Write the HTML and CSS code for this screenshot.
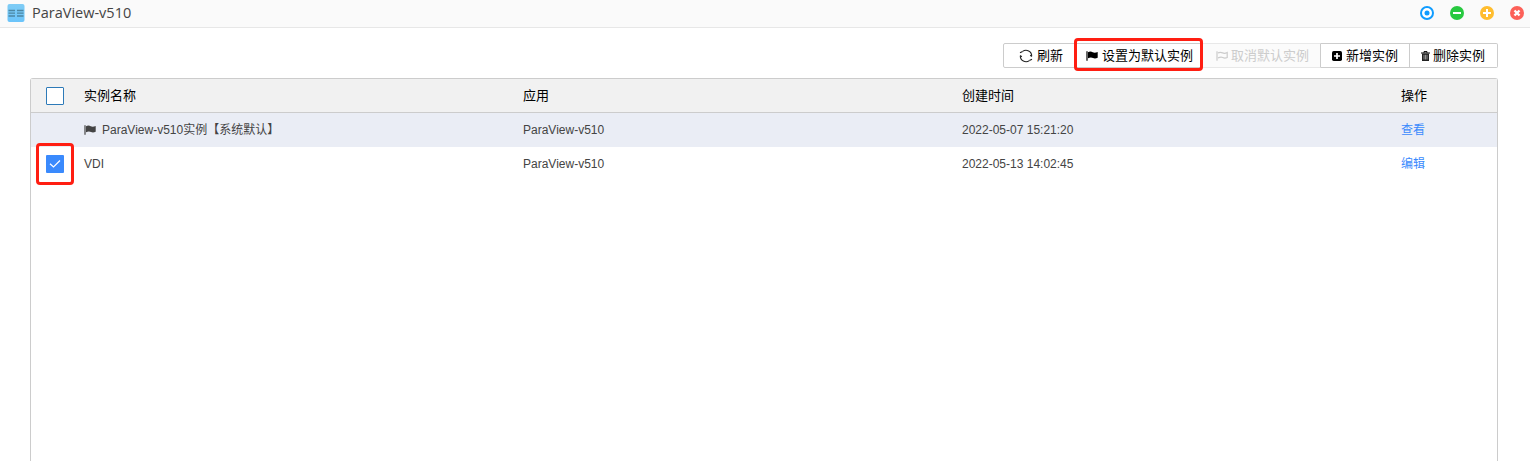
FILE: index.html
```html
<!DOCTYPE html>
<html lang="zh-CN">
<head>
<meta charset="utf-8">
<title>ParaView-v510</title>
<link rel="stylesheet" href="styles.css">
</head>
<body>
<div class="window">
  <header class="titlebar">
    <svg class="app-icon" viewBox="0 0 18 18"><defs><linearGradient id="sky" x2="0" y2="1"><stop stop-color="#7fccf5"/><stop offset="1" stop-color="#6bc4fa"/></linearGradient></defs><rect x=".5" width="17" height="18" rx="2" fill="url(#sky)"/><path d="M1.500 6.500h6.500M10 6.500h6.500M1.500 9.200h6.500M10 9.200h6.500M1.500 12h6.500M10 12h6.500" stroke="#4c87a3" stroke-width="1.300"/></svg>
    <h1 class="title">ParaView-v510</h1>
    <div class="controls">
      <svg viewBox="0 0 14 14"><circle cx="7" cy="7" r="6" fill="#fff" stroke="#109cff" stroke-width="2"/><circle cx="7" cy="7" r="2.500" fill="#109cff"/></svg>
      <svg viewBox="0 0 14 14"><circle cx="7" cy="7" r="7" fill="#28c940"/><path d="M3 7h8" stroke="#fff" stroke-width="2"/></svg>
      <svg viewBox="0 0 14 14"><circle cx="7" cy="7" r="7" fill="#ffbd2e"/><path d="M3 7h8M7 3v8" stroke="#fff" stroke-width="2"/></svg>
      <svg viewBox="0 0 14 14"><circle cx="7" cy="7" r="7" fill="#fc6058"/><path d="M4.500 4.500l5 5M9.500 4.500l-5 5" stroke="#fff" stroke-width="2.400"/></svg>
    </div>
  </header>
  <main class="content">
    <div class="toolbar">
      <button class="btn refresh"><svg class="icon-refresh" viewBox="0 0 14 14"><g fill="none" stroke="#222" stroke-width="1.100"><path d="M3.600 2.400A5.700 5.700 0 0 1 12.700 7.200M10.400 11.600A5.700 5.700 0 0 1 1.300 6.800"/><path d="M1 3.800l2.600-1.400M13 10.200l-2.600 1.400M12.700 7.500l-1.500-1.400M1.300 6.500l1.500 1.400"/></g></svg><span class="label">刷新</span></button>
      <button class="btn set-default"><svg class="icon-flag" viewBox="0 0 12 10"><path d="M1 .3v9.500" stroke="currentColor" stroke-width="1.200"/><path d="M2 1.200c2-1 3.500-.6 4.700 0s2.900.6 5-.2v5.800c-2 .9-3.500.8-4.700.2s-3-.8-5 .3z" fill="currentColor"/></svg><span class="label">设置为默认实例</span><span class="mark mark-button"></span></button>
      <button class="btn unset-default" disabled><svg class="icon-flag" viewBox="0 0 12 10"><path d="M1 .3v9.500M2 1.900c2-1 3.500-.6 4.700 0s2.700.5 4.500-.4v5c-1.800.8-3.300.6-4.500 0s-2.700-.5-4.700.4" stroke="currentColor" fill="none" stroke-width="1.200"/></svg><span class="label">取消默认实例</span></button>
      <button class="btn add"><svg class="icon-add" viewBox="0 0 10 10"><rect width="10" height="10" rx="1.700"/><path d="M2 5h6M5 2v6" stroke="#fff" stroke-width="1.700"/></svg><span class="label">新增实例</span></button>
      <button class="btn delete"><svg class="icon-trash" viewBox="0 0 9 10"><path d="M0 2h9M3 1.800V.6h3v1.200" fill="none" stroke="#000"/><path d="M1 2.500h7v7.500H1z" fill="#222"/><path d="M3 3.800v4.700M4.500 3.800v4.700M6 3.800v4.700" stroke="#ddd" stroke-width=".6"/></svg><span class="label">删除实例</span></button>
    </div>
    <section class="table">
      <div class="row head"><div class="check"><span class="box"></span></div><div>实例名称</div><div>应用</div><div>创建时间</div><div>操作</div></div>
      <div class="row default"><div></div><div class="name"><svg class="icon-flag" viewBox="0 0 12 10"><path d="M1 .3v9.500" stroke="currentColor" stroke-width="1.200"/><path d="M2 1.200c2-1 3.500-.6 4.700 0s2.900.6 5-.2v5.800c-2 .9-3.500.8-4.700.2s-3-.8-5 .3z" fill="currentColor"/></svg><span>ParaView-v510实例【系统默认】</span></div><div>ParaView-v510</div><div>2022-05-07 15:21:20</div><div><a class="link">查看</a></div></div>
      <div class="row"><div class="check"><span class="box checked"><svg viewBox="0 0 18 18"><path d="M4 8.700l3.500 3.300 6.500-6.500" fill="none" stroke="#fff" stroke-width="1.200"/></svg></span><span class="mark mark-check"></span></div><div>VDI</div><div>ParaView-v510</div><div>2022-05-13 14:02:45</div><div><a class="link">编辑</a></div></div>
    </section>
  </main>
</div>
</body>
</html>
```
FILE: styles.css
```css
* { box-sizing: border-box; }
body { margin: 0; background: #fff; font-family: "Liberation Sans", "Noto Sans CJK SC", sans-serif; overflow: hidden; }
svg { display: block; flex: none; overflow: visible; }
.window { height: 461px; display: flex; flex-direction: column; }
.titlebar { height: 28px; flex: none; display: flex; align-items: center; padding: 0 6px 1px 7px; background: #fafafa; border-bottom: 1px solid #e7e7e7; }
.app-icon { width: 18px; height: 18px; }
.title { margin: 0 0 0 7px; font: 400 14.5px/20px "Open Sans", sans-serif; color: #444; }
.controls { display: flex; gap: 16px; margin-left: auto; padding-bottom: 1px; }
.controls svg { width: 14px; height: 14px; }
.content { flex: 1; display: flex; flex-direction: column; padding: 15px 32px 0 30px; min-height: 0; }
.toolbar { display: flex; align-self: flex-end; height: 25px; margin-bottom: 10px; }
.btn { position: relative; display: flex; align-items: center; height: 25px; margin: 0; padding: 0; border: 1px solid #ccc; border-left-width: 0; background: #fff; color: #000; font: 13px/19px "Noto Sans CJK SC", sans-serif; white-space: nowrap; }
.label { padding-bottom: 2px; }
.refresh { width: 72px; padding-left: 15px; gap: 4px; border-left-width: 1px; border-radius: 2px 0 0 2px; }
.set-default { width: 128px; padding-left: 11px; gap: 4px; }
.unset-default { width: 118px; padding-left: 13px; gap: 3px; background: #fbfbfb; color: #ccc; border-color: #e8e8e8; border-right-color: #ccc; }
.add { width: 89px; padding-left: 11px; gap: 4px; }
.delete { width: 88px; padding-left: 11px; gap: 3px; border-radius: 0 2px 2px 0; }
.icon-refresh { width: 14px; height: 14px; }
.icon-flag { width: 12px; height: 10px; }
.icon-add { width: 10px; height: 10px; }
.icon-trash { width: 9px; height: 10px; }
.mark { position: absolute; border: 3px solid #ff1e12; border-radius: 4px; z-index: 1; }
.mark-button { inset: -6px -1px -4px -1px; }
.table { flex: 1; border: 1px solid #ccc; border-bottom: 0; border-radius: 3px 3px 0 0; }
.row { display: grid; grid-template-columns: 53px 439px 439px 439px 1fr; align-items: center; height: 34px; color: #444; font-size: 12px; line-height: 18px; }
.head { background: #f1f1f1; border-bottom: 1px solid #ccc; color: #000; font-size: 13px; }
.default { background: #eaedf5; }
.check { position: relative; padding-left: 15px; }
.box { display: block; width: 18px; height: 18px; border: 1px solid #2d7ab8; border-radius: 1px; background: #fff; }
.checked { border: 0; background: #3a8afd; }
.mark-check { left: 5px; top: -12px; width: 38px; height: 42px; }
.name { display: flex; align-items: center; gap: 6px; }
.link { color: #3a8afd; }
```
